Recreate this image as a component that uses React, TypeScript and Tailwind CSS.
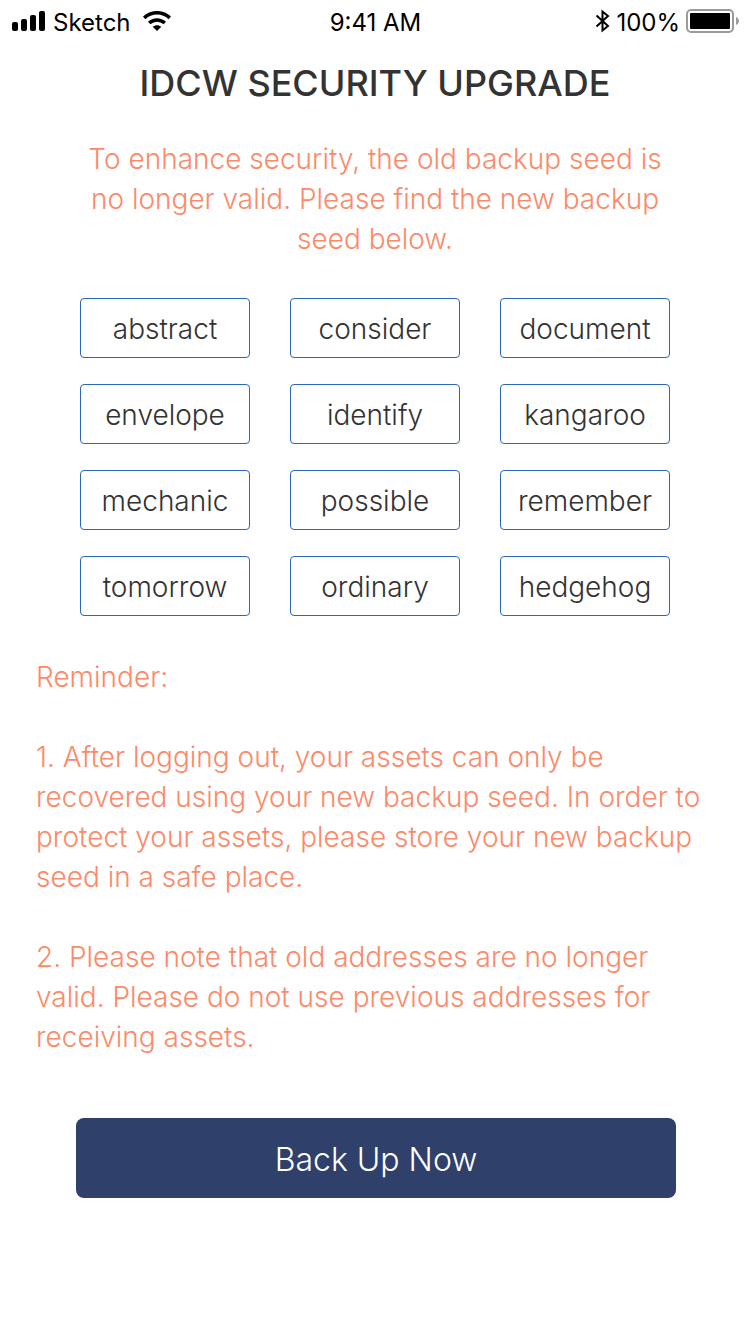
const words = [
  'abstract', 'consider', 'document',
  'envelope', 'identify', 'kangaroo',
  'mechanic', 'possible', 'remember',
  'tomorrow', 'ordinary', 'hedgehog',
];

function StatusBar() {
  return (
    <header className="grid h-[41px] grid-cols-[1fr_auto_1fr] items-center pl-3 pr-[11px] text-2xl leading-7 text-black">
      <div className="flex items-center gap-2">
        <svg width="33" height="20" viewBox="0 0 33 20" aria-hidden="true">
          <rect x="0" y="11" width="6" height="9" rx="2" />
          <rect x="9" y="8" width="6" height="12" rx="2" />
          <rect x="18" y="4" width="6" height="16" rx="2" />
          <rect x="27" y="0" width="6" height="20" rx="2" />
        </svg>
        <span className="pt-1">Sketch</span>
        <svg className="ml-1" width="28" height="20" viewBox="0 0 28 20" fill="none" stroke="#000" strokeWidth="3.6" aria-hidden="true">
          <path d="M1.200 6.800C8.500.1 19.500.1 26.800 6.800" />
          <path d="M6.200 12C10.700 7.900 17.300 7.900 21.800 12" />
          <path d="M9.700 15.800C12.300 13.600 15.700 13.600 18.300 15.800L14 20Z" fill="#000" stroke="none" />
        </svg>
      </div>
      <span className="pt-1 text-center">9:41 AM</span>
      <div className="flex items-center justify-end gap-1.5">
        <svg width="15" height="24" viewBox="0 0 15 24" fill="none" stroke="#000" strokeWidth="2" aria-hidden="true">
          <path d="M1.500 6.500 13 17 7.500 21.500V2.500L13 7 1.500 17.500" />
        </svg>
        <span className="pt-1">100%</span>
        <svg width="53" height="24" viewBox="0 0 53 24" aria-hidden="true">
          <rect x="1" y="1" width="46" height="22" rx="4" fill="none" stroke="#9b9b9b" strokeWidth="2" />
          <rect x="4" y="4" width="40" height="16" rx="1" />
          <path d="M50 8c4 2 4 6 0 8Z" fill="#9b9b9b" />
        </svg>
      </div>
    </header>
  );
}

export default function App() {
  return (
    <div className="min-h-screen bg-white font-['Inter','Liberation_Sans',sans-serif] text-[#333333]">
      <StatusBar />
      <main className="pb-12 pt-[18px]">
        <h1 className="text-center text-[36px] font-medium leading-12">IDCW SECURITY UPGRADE</h1>
        <p className="mt-8 text-center text-[28px] font-light leading-10 text-[#fc8a6a]">
          To enhance security, the old backup seed is
          <br />
          no longer valid. Please find the new backup
          <br />
          seed below.
        </p>
        <ul className="mt-[39px] grid grid-cols-3 gap-x-10 gap-y-[26px] px-20 text-[28px] font-light">
          {words.map((word) => (
            <li key={word} className="flex h-15 items-center justify-center rounded-sm border border-[#2c67b8] pt-0.5">
              {word}
            </li>
          ))}
        </ul>
        <section className="mt-[41px] flex flex-col gap-10 px-9 text-[28px] font-light leading-10 text-[#fc8a6a]">
          <h2>Reminder:</h2>
          <p>
            1. After logging out, your assets can only be
            <br />
            recovered using your new backup seed. In order to
            <br />
            protect your assets, please store your new backup
            <br />
            seed in a safe place.
          </p>
          <p>
            2. Please note that old addresses are no longer
            <br />
            valid. Please do not use previous addresses for
            <br />
            receiving assets.
          </p>
        </section>
        <div className="mt-[61px] pl-[76px] pr-[74px]">
          <button type="button" className="h-20 w-full rounded-lg bg-[#2f406b] pt-1 text-[32px] font-light text-white">
            Back Up Now
          </button>
        </div>
      </main>
    </div>
  );
}
